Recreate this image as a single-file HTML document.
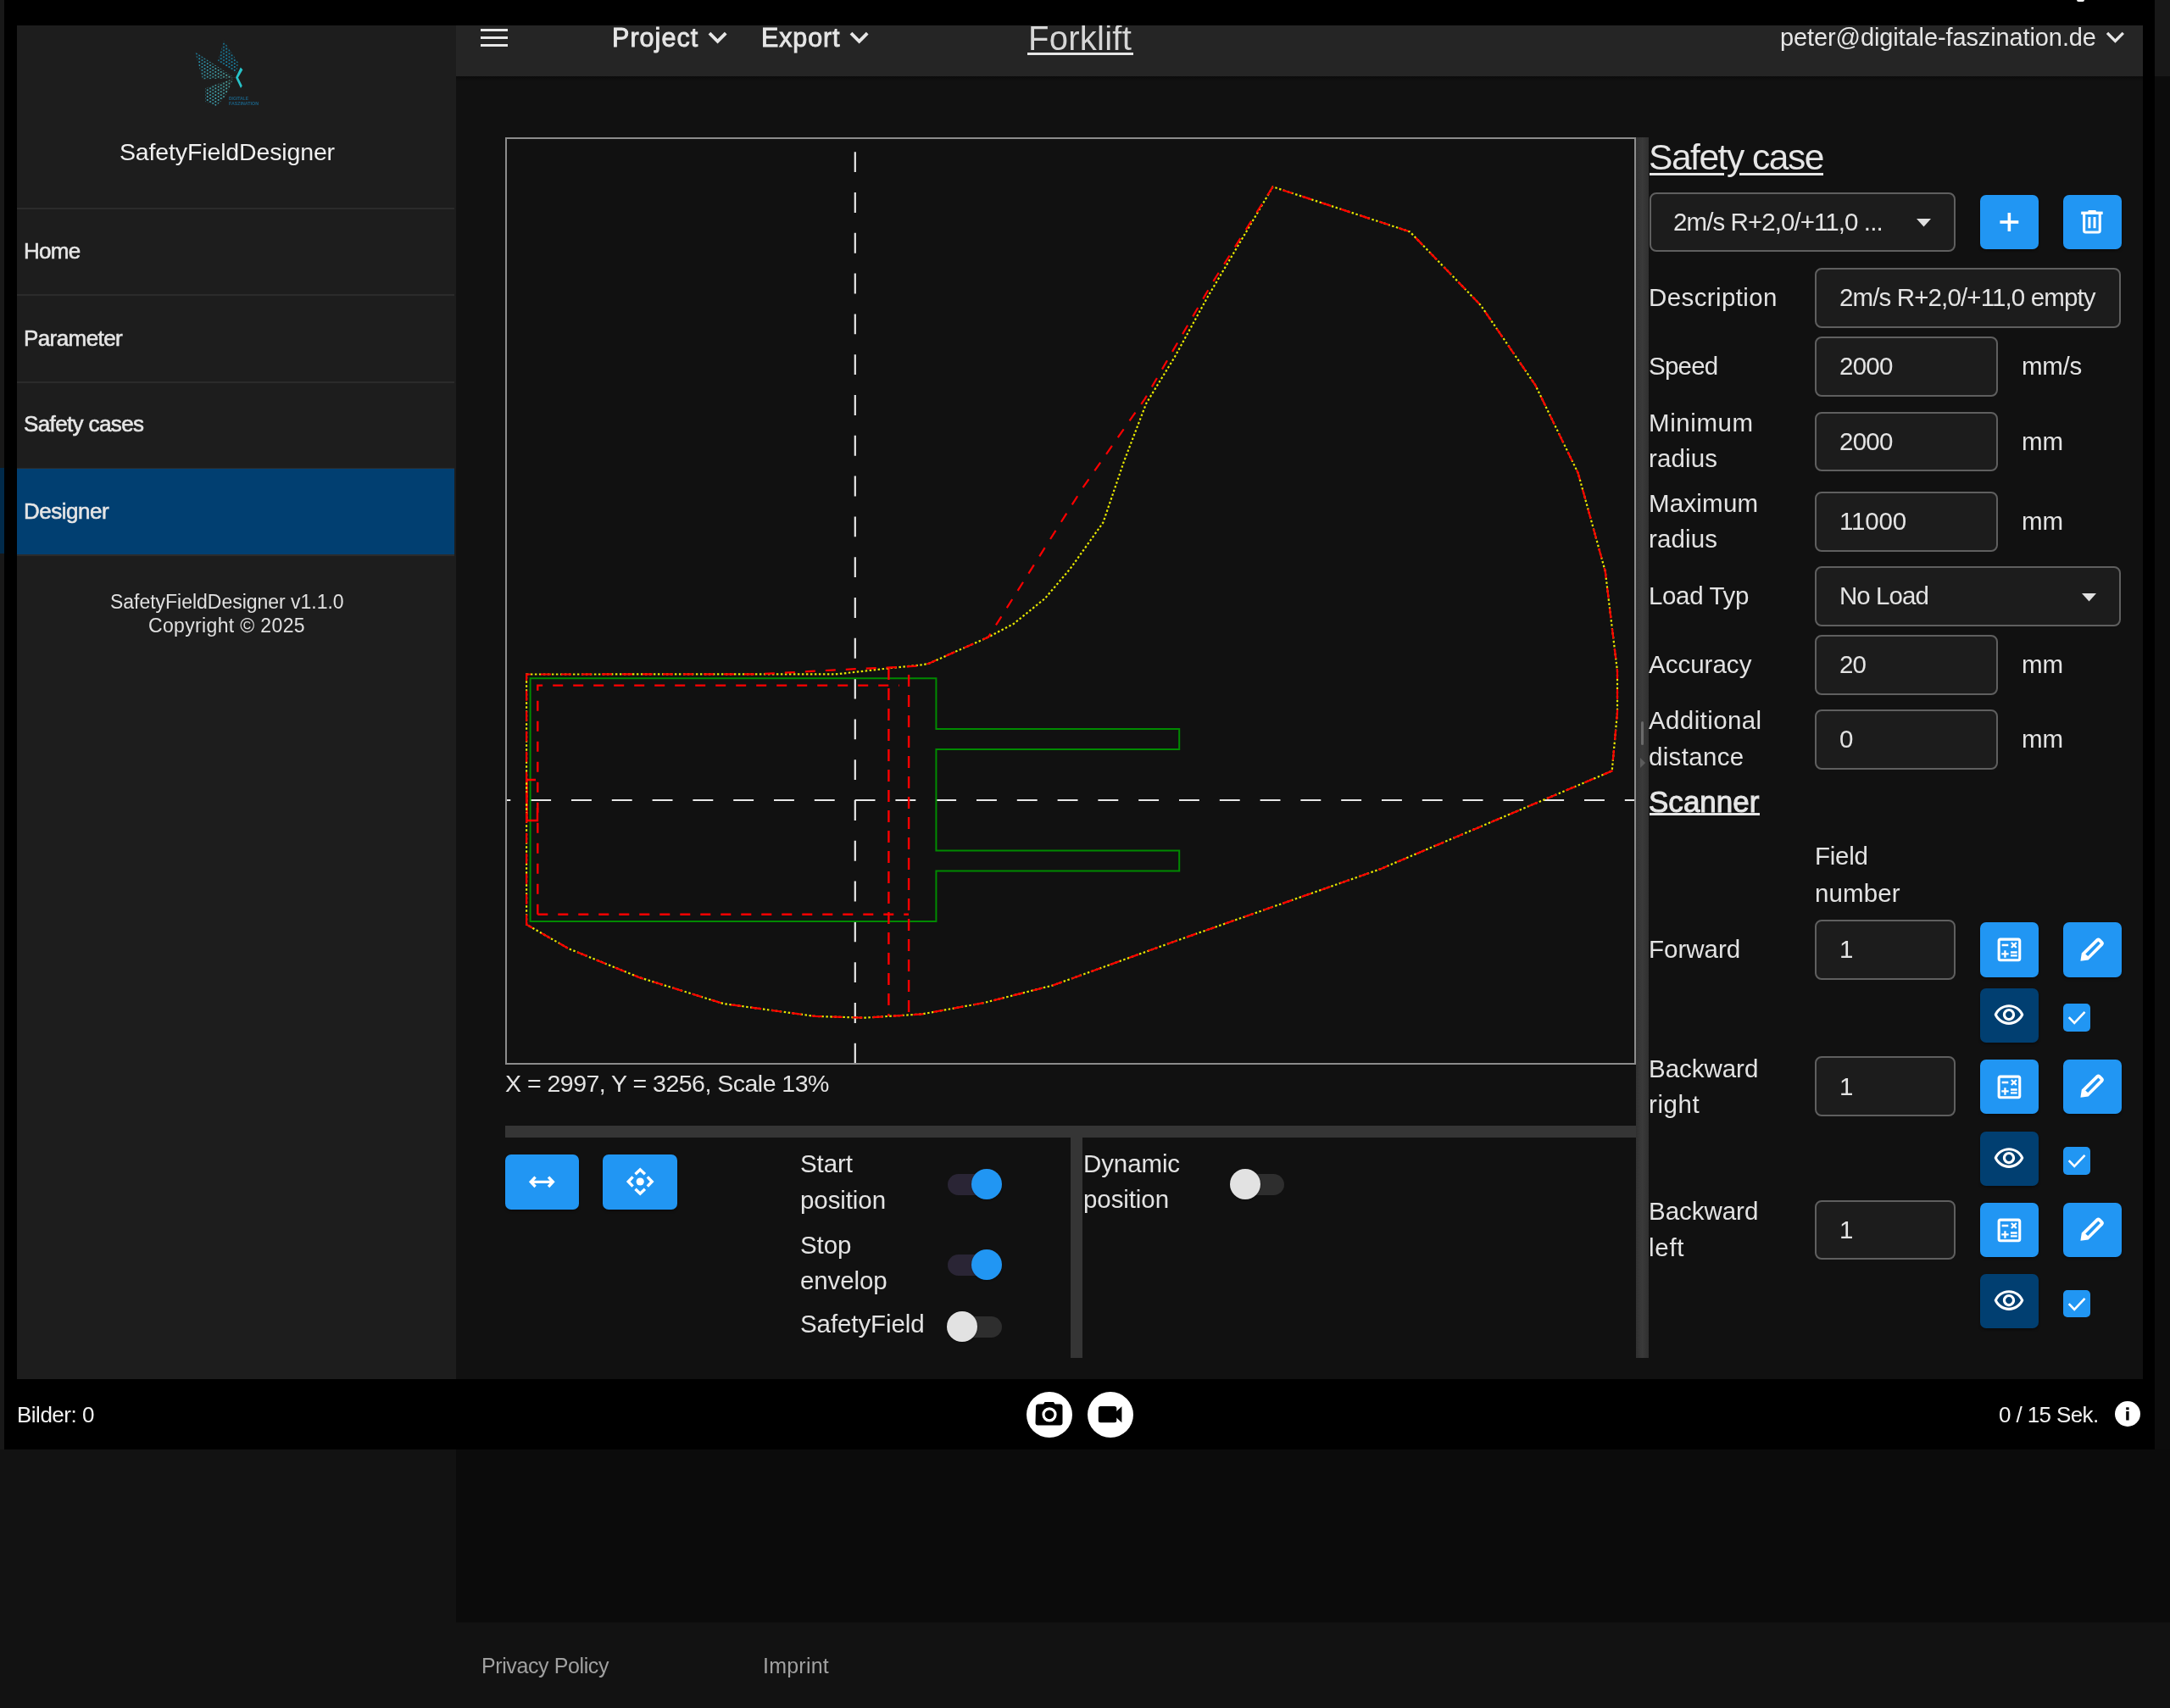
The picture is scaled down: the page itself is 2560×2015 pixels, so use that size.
<!DOCTYPE html>
<html><head><meta charset="utf-8"><title>SafetyFieldDesigner</title>
<style>
html,body{margin:0;padding:0;}
body{width:2560px;height:2015px;background:#121212;overflow:hidden;position:relative;font-family:"Liberation Sans",sans-serif;}
.a{position:absolute;}
.t{white-space:nowrap;will-change:transform;}
svg.a{overflow:visible;}
</style></head><body>
<div class="a" style="left:0px;top:0px;width:5px;height:1710px;background:#181818;"></div>
<div class="a" style="left:0px;top:552px;width:5px;height:101px;background:#012a4a;"></div>
<div class="a" style="left:2542px;top:0px;width:18px;height:90px;background:#181818;"></div>
<div class="a" style="left:2542px;top:90px;width:18px;height:1620px;background:#0c0c0c;"></div>
<div class="a" style="left:538px;top:1710px;width:2022px;height:204px;background:#0b0b0b;"></div>
<div class="a" style="left:5px;top:0px;width:2537px;height:30px;background:#000;z-index:5;"></div>
<div class="a" style="left:5px;top:0px;width:15px;height:1710px;background:#000;z-index:5;"></div>
<div class="a" style="left:2528px;top:0px;width:14px;height:1710px;background:#000;z-index:5;"></div>
<div class="a" style="left:5px;top:1627px;width:2537px;height:83px;background:#000;z-index:5;"></div>
<div class="a" style="left:2450px;top:0px;width:9px;height:2px;background:#f4f4f4;border-radius:0 0 2px 2px;z-index:6;"></div>
<div class="a" style="left:20px;top:30px;width:518px;height:1597px;background:#1d1d1d;"></div>
<div class="a" style="left:538px;top:30px;width:1990px;height:60px;background:#252525;"></div>
<div class="a" style="left:538px;top:90px;width:1990px;height:1537px;background:#111111;"></div>
<div class="a" style="left:538px;top:90px;width:1990px;height:6px;background:linear-gradient(#0b0b0b,#111111);"></div>
<div class="a" style="left:20px;top:245px;width:516px;height:2px;background:#2b2b2b;"></div>
<div class="a" style="left:20px;top:347px;width:516px;height:2px;background:#2b2b2b;"></div>
<div class="a" style="left:20px;top:449.5px;width:516px;height:2px;background:#2b2b2b;"></div>
<div class="a" style="left:20px;top:551.5px;width:516px;height:2px;background:#2b2b2b;"></div>
<div class="a" style="left:20px;top:653.5px;width:516px;height:2px;background:#2b2b2b;"></div>
<div class="a" style="left:20px;top:552.5px;width:516px;height:101px;background:#013f71;"></div>
<div class="a t" style="left:141.0px;top:165.4px;font-size:28.5px;line-height:28.5px;color:#f0f0f0;letter-spacing:-0.14px;">SafetyFieldDesigner</div>
<div class="a t" style="left:27.8px;top:282.6px;font-size:26px;line-height:26px;color:#e6e6e6;letter-spacing:-0.69px;-webkit-text-stroke:0.55px #e6e6e6;">Home</div>
<div class="a t" style="left:27.8px;top:385.6px;font-size:26px;line-height:26px;color:#e6e6e6;letter-spacing:-0.59px;-webkit-text-stroke:0.55px #e6e6e6;">Parameter</div>
<div class="a t" style="left:27.8px;top:487.0px;font-size:26px;line-height:26px;color:#e6e6e6;letter-spacing:-0.62px;-webkit-text-stroke:0.55px #e6e6e6;">Safety cases</div>
<div class="a t" style="left:27.8px;top:589.5px;font-size:26px;line-height:26px;color:#e6e6e6;letter-spacing:-0.49px;-webkit-text-stroke:0.55px #e6e6e6;">Designer</div>
<div class="a t" style="left:130.0px;top:698.5px;font-size:23px;line-height:23px;color:#e0e0e0;letter-spacing:-0.02px;">SafetyFieldDesigner v1.1.0</div>
<div class="a t" style="left:175.0px;top:727.0px;font-size:23px;line-height:23px;color:#e0e0e0;letter-spacing:0.35px;">Copyright © 2025</div>
<div class="a" style="left:567px;top:34px;width:32px;height:3.2px;background:#e8e8e8;"></div>
<div class="a" style="left:567px;top:43px;width:32px;height:3.2px;background:#e8e8e8;"></div>
<div class="a" style="left:567px;top:52px;width:32px;height:3.2px;background:#e8e8e8;"></div>
<div class="a t" style="left:721.7px;top:29.2px;font-size:30.5px;line-height:30.5px;color:#e6e6e6;letter-spacing:1.05px;-webkit-text-stroke:0.9px #e6e6e6;">Project</div>
<div class="a t" style="left:897.7px;top:29.2px;font-size:30.5px;line-height:30.5px;color:#e6e6e6;letter-spacing:0.86px;-webkit-text-stroke:0.9px #e6e6e6;">Export</div>
<div class="a t" style="left:1212.8px;top:25.3px;font-size:40px;line-height:40px;color:#d6d6d6;letter-spacing:0.25px;">Forklift</div>
<div class="a" style="left:1212px;top:62.2px;width:124.5px;height:3px;background:#e6e6e6;"></div>
<div class="a t" style="left:2100.0px;top:29.5px;font-size:29px;line-height:29px;color:#e6e6e6;letter-spacing:-0.11px;">peter@digitale-faszination.de</div>
<svg class="a" style="left:0;top:0" width="1" height="1"><path d="M837,39.2 L846.6,48.8 L856.2,39.2" fill="none" stroke="#e6e6e6" stroke-width="3.9" stroke-linejoin="miter"/></svg>
<svg class="a" style="left:0;top:0" width="1" height="1"><path d="M1004,39.2 L1013.6,48.8 L1023.2,39.2" fill="none" stroke="#e6e6e6" stroke-width="3.9" stroke-linejoin="miter"/></svg>
<svg class="a" style="left:0;top:0" width="1" height="1"><path d="M2486,38.9 L2495.4,48.4 L2504.8,38.9" fill="none" stroke="#e6e6e6" stroke-width="3.4" stroke-linejoin="miter"/></svg>
<div class="a" style="left:596px;top:162px;width:1334px;height:1094px;background:#111111;box-sizing:border-box;border:2px solid #8c8c8c;"></div>
<svg class="a" style="left:0;top:0" width="2560" height="2015" viewBox="0 0 2560 2015"><defs><clipPath id="cv"><rect x="598" y="164" width="1330" height="1090"/></clipPath></defs><g clip-path="url(#cv)"><line x1="578.4" y1="944" x2="1930" y2="944" stroke="#e8e8e8" stroke-width="2.2" stroke-dasharray="23.9 23.9"/><line x1="1008.8" y1="131.4" x2="1008.8" y2="1260" stroke="#e8e8e8" stroke-width="2.2" stroke-dasharray="23.9 23.9"/><polygon points="625.6,800.3 1104.4,800.3 1104.4,859.9 1391.2,859.9 1391.2,884 1104.4,884 1104.4,1003.4 1391.2,1003.4 1391.2,1027.6 1104.4,1027.6 1104.4,1087.1 625.6,1087.1" fill="none" stroke="#008a00" stroke-width="2"/><path d="M634.3,1078.7 V808.6 H1061 M634.3,1078.7 H1072" fill="none" stroke="#f00" stroke-width="2.4" stroke-dasharray="12 12"/><path d="M1048.4,788 V1199 M1072.1,796 V1199" fill="none" stroke="#f00" stroke-width="2.4" stroke-dasharray="14 10"/><path d="M632,920 H621.5 V968 H634 V953" fill="none" stroke="#f00" stroke-width="2.4"/><polygon points="621.1,1090.7 621.1,795.5 985.8,795.4 1009.8,792.8 1051.7,788 1085.3,784.7 1095.4,782.9 1166,751.6 1196,735.8 1232.8,706 1262.7,670.8 1301.4,616.4 1326,544.3 1352.3,475.8 1385.7,421.4 1424.3,351 1501.6,220.4 1663.3,273.4 1746.9,360.2 1811.4,454.5 1861.7,558.1 1893.7,673.8 1908,791.7 1908,840.6 1901.7,909.5 1628.1,1025.4 1387.3,1110 1242.2,1162.4 1161.9,1182.8 1087.8,1196.4 1019.9,1200.7 961.2,1198.9 853.2,1184 754.4,1153.2 671,1119.2" fill="none" stroke="#e8e800" stroke-width="2.2" stroke-dasharray="2.5 2.5"/><polygon points="621.1,1090.7 621.1,795.5 890,795.4 919.9,794 967.8,791.3 1015.8,788.9 1063.7,786.8 1081.7,785.6 1095.4,782.9 1166,751.6 1277,576 1350.6,470.6 1431.4,331.8 1501.6,220.4 1663.3,273.4 1746.9,360.2 1811.4,454.5 1861.7,558.1 1893.7,673.8 1908,791.7 1908,840.6 1901.7,909.5 1628.1,1025.4 1387.3,1110 1242.2,1162.4 1161.9,1182.8 1087.8,1196.4 1019.9,1200.7 961.2,1198.9 853.2,1184 754.4,1153.2 671,1119.2" fill="none" stroke="#f00" stroke-width="2.2" stroke-dasharray="12 12"/></g></svg>
<div class="a t" style="left:595.5px;top:1264.3px;font-size:28.5px;line-height:28.5px;color:#e3e3e3;letter-spacing:-0.51px;">X = 2997, Y = 3256, Scale 13%</div>
<div class="a" style="left:596px;top:1328px;width:1334px;height:14px;background:#353535;"></div>
<div class="a" style="left:1263px;top:1342px;width:14px;height:260px;background:#353535;"></div>
<div class="a" style="left:1930px;top:162px;width:15px;height:1440px;background:linear-gradient(90deg,#303030,#3a3a3a 50%,#303030);"></div>
<div class="a" style="left:1936px;top:850.5px;width:3px;height:28.5px;background:#6a6a6a;border-radius:2px;"></div>
<svg class="a" style="left:1934px;top:894px" width="8" height="12"><polygon points="1,0 7,6 1,12" fill="#5c5c5c"/></svg>
<div class="a" style="left:595.5px;top:1362px;width:87px;height:64.5px;background:#2196f3;border-radius:7px;box-shadow:0 2px 3px rgba(0,0,0,.35);"></div>
<svg class="a" style="left:0;top:0" width="1" height="1"><path d="M631.6,1388.6 L626.2,1394.3 L631.6,1400 M647,1388.6 L652.4,1394.3 L647,1400 M627,1394.3 H651.5" fill="none" stroke="#fff" stroke-width="3.3"/></svg>
<div class="a" style="left:711px;top:1362px;width:88px;height:64.5px;background:#2196f3;border-radius:7px;box-shadow:0 2px 3px rgba(0,0,0,.35);"></div>
<svg class="a" style="left:0;top:0" width="1" height="1"><path d="M749.5,1385.2 L755.2,1379.8 L760.9,1385.2 M749.5,1402.8 L755.2,1408.2 L760.9,1402.8 M746.6,1388.3 L741.2,1394 L746.6,1399.7 M763.8,1388.3 L769.2,1394 L763.8,1399.7" fill="none" stroke="#fff" stroke-width="3.4"/><circle cx="755.2" cy="1394" r="4.6" fill="#fff"/></svg>
<div class="a t" style="left:944.0px;top:1357.6px;font-size:29.5px;line-height:29.5px;color:#e3e3e3;letter-spacing:-0.08px;">Start</div>
<div class="a t" style="left:944.0px;top:1401.1px;font-size:29.5px;line-height:29.5px;color:#e3e3e3;letter-spacing:-0.09px;">position</div>
<div class="a" style="left:1117.5px;top:1384.5px;width:64px;height:25px;border-radius:12.5px;background:#2a2535;"></div>
<div class="a" style="left:1146.0px;top:1379px;width:36px;height:36px;border-radius:18px;background:#2196f3;box-shadow:0 1px 2px rgba(0,0,0,.3);"></div>
<div class="a t" style="left:944.0px;top:1453.7px;font-size:29.5px;line-height:29.5px;color:#e3e3e3;letter-spacing:-0.10px;">Stop</div>
<div class="a t" style="left:944.0px;top:1495.6px;font-size:29.5px;line-height:29.5px;color:#e3e3e3;letter-spacing:-0.10px;">envelop</div>
<div class="a" style="left:1117.5px;top:1479.5px;width:64px;height:25px;border-radius:12.5px;background:#2a2535;"></div>
<div class="a" style="left:1146.0px;top:1474px;width:36px;height:36px;border-radius:18px;background:#2196f3;box-shadow:0 1px 2px rgba(0,0,0,.3);"></div>
<div class="a t" style="left:944.0px;top:1547.3px;font-size:29.5px;line-height:29.5px;color:#e3e3e3;letter-spacing:-0.09px;">SafetyField</div>
<div class="a" style="left:1117.5px;top:1552.8px;width:64px;height:25px;border-radius:12.5px;background:#2e2e2e;"></div>
<div class="a" style="left:1117.0px;top:1547.3px;width:36px;height:36px;border-radius:18px;background:#e2e2e2;box-shadow:0 1px 2px rgba(0,0,0,.3);"></div>
<div class="a t" style="left:1278.0px;top:1357.6px;font-size:29.5px;line-height:29.5px;color:#e3e3e3;letter-spacing:-0.11px;">Dynamic</div>
<div class="a t" style="left:1278.0px;top:1400.4px;font-size:29.5px;line-height:29.5px;color:#e3e3e3;letter-spacing:-0.09px;">position</div>
<div class="a" style="left:1451px;top:1384.5px;width:64px;height:25px;border-radius:12.5px;background:#2e2e2e;"></div>
<div class="a" style="left:1450.5px;top:1379px;width:36px;height:36px;border-radius:18px;background:#e2e2e2;box-shadow:0 1px 2px rgba(0,0,0,.3);"></div>
<div class="a t" style="left:1944.5px;top:165.4px;font-size:42.5px;line-height:42.5px;color:#e6e6e6;letter-spacing:-1.46px;">Safety case</div>
<div class="a" style="left:1945.5px;top:204px;width:88.5px;height:3.4px;background:#e6e6e6;"></div>
<div class="a" style="left:2051.5px;top:204px;width:99.5px;height:3.4px;background:#e6e6e6;"></div>
<div class="a" style="left:1945.5px;top:226.5px;width:361.5px;height:70.5px;box-sizing:border-box;border:2px solid #5f5f5f;border-radius:8px;background:#1c1c1c;"></div>
<div class="a t" style="left:1974.4px;top:247.3px;font-size:29.5px;line-height:29.5px;color:#e3e3e3;letter-spacing:-0.92px;">2m/s R+2,0/+11,0 ...</div>
<svg class="a" style="left:2261px;top:258px" width="17" height="9.5"><polygon points="0,0 17,0 8.5,9.5" fill="#e0e0e0"/></svg>
<div class="a" style="left:2336px;top:229.7px;width:69px;height:64.5px;background:#2196f3;border-radius:7px;box-shadow:0 2px 3px rgba(0,0,0,.35);"></div>
<svg class="a" style="left:0;top:0" width="1" height="1"><rect x="2359.4" y="260.2" width="21.9" height="3.6" fill="#fff"/><rect x="2368.55" y="251" width="3.6" height="21.9" fill="#fff"/></svg>
<div class="a" style="left:2433.5px;top:229.7px;width:69px;height:64.5px;background:#2196f3;border-radius:7px;box-shadow:0 2px 3px rgba(0,0,0,.35);"></div>
<svg class="a" style="left:0;top:0" width="1" height="1"><rect x="2455.2" y="249.6" width="25.5" height="3.4" fill="#fff"/><rect x="2463.4" y="247.9" width="9.4" height="3" rx="1" fill="#fff"/><path d="M2457.1,252.8 H2478.8 V272 A3.5,3.5 0 0 1 2475.3,275.5 H2460.6 A3.5,3.5 0 0 1 2457.1,272 Z M2460.2,252.8 V272.4 H2475.7 V252.8 Z" fill="#fff" fill-rule="evenodd"/><rect x="2463.4" y="256" width="3" height="13.2" fill="#fff"/><rect x="2469.5" y="256" width="3" height="13.2" fill="#fff"/></svg>
<div class="a t" style="left:1944.8px;top:336.4px;font-size:29.5px;line-height:29.5px;color:#e3e3e3;letter-spacing:0.39px;">Description</div>
<div class="a" style="left:2140.5px;top:316px;width:361.5px;height:70.5px;box-sizing:border-box;border:2px solid #5f5f5f;border-radius:8px;background:#1c1c1c;"></div>
<div class="a t" style="left:2170.4px;top:336.4px;font-size:29.5px;line-height:29.5px;color:#e3e3e3;letter-spacing:-0.87px;">2m/s R+2,0/+11,0 empty</div>
<div class="a t" style="left:1944.8px;top:417.4px;font-size:29.5px;line-height:29.5px;color:#e3e3e3;letter-spacing:-0.76px;">Speed</div>
<div class="a" style="left:2140.5px;top:397px;width:216px;height:70.5px;box-sizing:border-box;border:2px solid #5f5f5f;border-radius:8px;background:#1c1c1c;"></div>
<div class="a t" style="left:2170.4px;top:417.3px;font-size:29.5px;line-height:29.5px;color:#e3e3e3;letter-spacing:-0.73px;">2000</div>
<div class="a t" style="left:2385.4px;top:417.3px;font-size:29.5px;line-height:29.5px;color:#e3e3e3;letter-spacing:-0.32px;">mm/s</div>
<div class="a t" style="left:1944.8px;top:484.3px;font-size:29.5px;line-height:29.5px;color:#e3e3e3;letter-spacing:0.58px;">Minimum</div>
<div class="a t" style="left:1944.8px;top:526.0px;font-size:29.5px;line-height:29.5px;color:#e3e3e3;letter-spacing:0.11px;">radius</div>
<div class="a" style="left:2140.5px;top:485.5px;width:216px;height:70.5px;box-sizing:border-box;border:2px solid #5f5f5f;border-radius:8px;background:#1c1c1c;"></div>
<div class="a t" style="left:2170.4px;top:505.8px;font-size:29.5px;line-height:29.5px;color:#e3e3e3;letter-spacing:-0.73px;">2000</div>
<div class="a t" style="left:2385.4px;top:505.8px;font-size:29.5px;line-height:29.5px;color:#e3e3e3;letter-spacing:-0.17px;">mm</div>
<div class="a t" style="left:1944.8px;top:579.0px;font-size:29.5px;line-height:29.5px;color:#e3e3e3;letter-spacing:0.21px;">Maximum</div>
<div class="a t" style="left:1944.8px;top:621.2px;font-size:29.5px;line-height:29.5px;color:#e3e3e3;letter-spacing:0.11px;">radius</div>
<div class="a" style="left:2140.5px;top:580px;width:216px;height:70.5px;box-sizing:border-box;border:2px solid #5f5f5f;border-radius:8px;background:#1c1c1c;"></div>
<div class="a t" style="left:2170.4px;top:600.3px;font-size:29.5px;line-height:29.5px;color:#e3e3e3;letter-spacing:-0.17px;">11000</div>
<div class="a t" style="left:2385.4px;top:600.3px;font-size:29.5px;line-height:29.5px;color:#e3e3e3;letter-spacing:-0.17px;">mm</div>
<div class="a t" style="left:1944.8px;top:769.0px;font-size:29.5px;line-height:29.5px;color:#e3e3e3;letter-spacing:0.01px;">Accuracy</div>
<div class="a" style="left:2140.5px;top:749px;width:216px;height:70.5px;box-sizing:border-box;border:2px solid #5f5f5f;border-radius:8px;background:#1c1c1c;"></div>
<div class="a t" style="left:2170.4px;top:769.3px;font-size:29.5px;line-height:29.5px;color:#e3e3e3;letter-spacing:-0.96px;">20</div>
<div class="a t" style="left:2385.4px;top:769.3px;font-size:29.5px;line-height:29.5px;color:#e3e3e3;letter-spacing:-0.17px;">mm</div>
<div class="a t" style="left:1944.8px;top:835.3px;font-size:29.5px;line-height:29.5px;color:#e3e3e3;letter-spacing:0.39px;">Additional</div>
<div class="a t" style="left:1944.8px;top:878.0px;font-size:29.5px;line-height:29.5px;color:#e3e3e3;letter-spacing:0.33px;">distance</div>
<div class="a" style="left:2140.5px;top:837px;width:216px;height:70.5px;box-sizing:border-box;border:2px solid #5f5f5f;border-radius:8px;background:#1c1c1c;"></div>
<div class="a t" style="left:2170.4px;top:857.3px;font-size:29.5px;line-height:29.5px;color:#e3e3e3;letter-spacing:-1.51px;">0</div>
<div class="a t" style="left:2385.4px;top:857.3px;font-size:29.5px;line-height:29.5px;color:#e3e3e3;letter-spacing:-0.17px;">mm</div>
<div class="a t" style="left:1944.8px;top:688.3px;font-size:29.5px;line-height:29.5px;color:#e3e3e3;letter-spacing:-0.35px;">Load Typ</div>
<div class="a" style="left:2140.5px;top:668.3px;width:361.5px;height:70.5px;box-sizing:border-box;border:2px solid #5f5f5f;border-radius:8px;background:#1c1c1c;"></div>
<div class="a t" style="left:2170.4px;top:688.3px;font-size:29.5px;line-height:29.5px;color:#e3e3e3;letter-spacing:-0.95px;">No Load</div>
<svg class="a" style="left:2456px;top:700px" width="17" height="9.5"><polygon points="0,0 17,0 8.5,9.5" fill="#e0e0e0"/></svg>
<div class="a t" style="left:1944.8px;top:927.7px;font-size:35px;line-height:35px;color:#e6e6e6;letter-spacing:0.02px;-webkit-text-stroke:1px #e6e6e6;">Scanner</div>
<div class="a" style="left:1945.5px;top:959px;width:130.5px;height:3.2px;background:#e6e6e6;"></div>
<div class="a t" style="left:2141.4px;top:995.4px;font-size:29.5px;line-height:29.5px;color:#e3e3e3;letter-spacing:-0.25px;">Field</div>
<div class="a t" style="left:2141.4px;top:1039.0px;font-size:29.5px;line-height:29.5px;color:#e3e3e3;letter-spacing:0.10px;">number</div>
<div class="a t" style="left:1944.8px;top:1105.0px;font-size:29.5px;line-height:29.5px;color:#e3e3e3;">Forward</div>
<div class="a" style="left:2140.5px;top:1085px;width:166.5px;height:70.5px;box-sizing:border-box;border:2px solid #5f5f5f;border-radius:8px;background:#1c1c1c;"></div>
<div class="a t" style="left:2170.4px;top:1105.3px;font-size:29.5px;line-height:29.5px;color:#e3e3e3;letter-spacing:-0.11px;">1</div>
<div class="a" style="left:2336px;top:1088.2px;width:69px;height:64.5px;background:#2196f3;border-radius:7px;box-shadow:0 2px 3px rgba(0,0,0,.35);"></div>
<svg class="a" style="left:2351.7px;top:1102.2px" width="36.9" height="36.9" viewBox="0 0 24 24"><path d="M19 3H5c-1.1 0-2 .9-2 2v14c0 1.1.9 2 2 2h14c1.1 0 2-.9 2-2V5c0-1.1-.9-2-2-2zm0 16H5V5h14v14zM6.25 7.72h5v1.5h-5zM13 15.75h5v1.5h-5zm0-2.5h5v1.5h-5zM8 18h1.5v-2h2v-1.5h-2v-2H8v2H6v1.5h2zm6.09-7.05l1.41-1.41 1.41 1.41 1.06-1.06-1.41-1.420 1.41-1.41L16.91 6 15.5 7.41 14.09 6l-1.06 1.06 1.41 1.41-1.41 1.42z" fill="#fff" /></svg>
<div class="a" style="left:2433.5px;top:1088.2px;width:69px;height:64.5px;background:#2196f3;border-radius:7px;box-shadow:0 2px 3px rgba(0,0,0,.35);"></div>
<svg class="a" style="left:0;top:-0.09999999999990905px" width="1" height="1"><path d="M2454.4,1133.8 L2455.8,1124.6 L2473,1107.6 Q2475.4,1105.3 2477.8,1107.6 L2480.8,1110.6 Q2483.1,1113 2480.8,1115.4 L2463.6,1132.6 Z M2460.2,1125.5 L2475.4,1110.5 L2477.9,1113.1 L2463.2,1128.1 Z" fill="#fff" fill-rule="evenodd"/></svg>
<div class="a" style="left:2336px;top:1165.5px;width:69px;height:64px;background:#013f71;border-radius:7px;box-shadow:0 2px 3px rgba(0,0,0,.35);"></div>
<svg class="a" style="left:2350.5px;top:1177.5px" width="38" height="38" viewBox="0 0 24 24"><path d="M12 6.5c3.79 0 7.17 2.13 8.82 5.5-1.65 3.37-5.02 5.5-8.82 5.5S4.83 15.37 3.18 12C4.83 8.63 8.21 6.5 12 6.5m0-2C7 4.5 2.73 7.61 1 12c1.73 4.39 6 7.5 11 7.5s9.27-3.11 11-7.5c-1.73-4.39-6-7.5-11-7.5zm0 5c1.38 0 2.5 1.12 2.5 2.5s-1.12 2.5-2.5 2.5-2.5-1.12-2.5-2.5 1.12-2.5 2.5-2.5m0-2c-2.48 0-4.5 2.02-4.5 4.5s2.02 4.5 4.5 4.5 4.5-2.02 4.5-4.5-2.02-4.5-4.5-4.5z" fill="#fff" /></svg>
<div class="a" style="left:2433.5px;top:1184.0px;width:32.5px;height:32.5px;border-radius:5px;background:#2196f3;"></div>
<svg class="a" style="left:2433.5px;top:1184.0px" width="33" height="33"><polyline points="6.7,16.1 13.2,22.9 25.5,9.8" fill="none" stroke="#fff" stroke-width="2.6"/></svg>
<div class="a t" style="left:1944.8px;top:1245.8px;font-size:29.5px;line-height:29.5px;color:#e3e3e3;letter-spacing:-0.03px;">Backward</div>
<div class="a t" style="left:1944.8px;top:1288.0px;font-size:29.5px;line-height:29.5px;color:#e3e3e3;letter-spacing:0.60px;">right</div>
<div class="a" style="left:2140.5px;top:1246.3px;width:166.5px;height:70.5px;box-sizing:border-box;border:2px solid #5f5f5f;border-radius:8px;background:#1c1c1c;"></div>
<div class="a t" style="left:2170.4px;top:1266.6px;font-size:29.5px;line-height:29.5px;color:#e3e3e3;letter-spacing:-0.11px;">1</div>
<div class="a" style="left:2336px;top:1249.5px;width:69px;height:64.5px;background:#2196f3;border-radius:7px;box-shadow:0 2px 3px rgba(0,0,0,.35);"></div>
<svg class="a" style="left:2351.7px;top:1263.5px" width="36.9" height="36.9" viewBox="0 0 24 24"><path d="M19 3H5c-1.1 0-2 .9-2 2v14c0 1.1.9 2 2 2h14c1.1 0 2-.9 2-2V5c0-1.1-.9-2-2-2zm0 16H5V5h14v14zM6.25 7.72h5v1.5h-5zM13 15.75h5v1.5h-5zm0-2.5h5v1.5h-5zM8 18h1.5v-2h2v-1.5h-2v-2H8v2H6v1.5h2zm6.09-7.05l1.41-1.41 1.41 1.41 1.06-1.06-1.41-1.420 1.41-1.41L16.91 6 15.5 7.41 14.09 6l-1.06 1.06 1.41 1.41-1.41 1.42z" fill="#fff" /></svg>
<div class="a" style="left:2433.5px;top:1249.5px;width:69px;height:64.5px;background:#2196f3;border-radius:7px;box-shadow:0 2px 3px rgba(0,0,0,.35);"></div>
<svg class="a" style="left:0;top:161.20000000000005px" width="1" height="1"><path d="M2454.4,1133.8 L2455.8,1124.6 L2473,1107.6 Q2475.4,1105.3 2477.8,1107.6 L2480.8,1110.6 Q2483.1,1113 2480.8,1115.4 L2463.6,1132.6 Z M2460.2,1125.5 L2475.4,1110.5 L2477.9,1113.1 L2463.2,1128.1 Z" fill="#fff" fill-rule="evenodd"/></svg>
<div class="a" style="left:2336px;top:1334.6px;width:69px;height:64px;background:#013f71;border-radius:7px;box-shadow:0 2px 3px rgba(0,0,0,.35);"></div>
<svg class="a" style="left:2350.5px;top:1346.6px" width="38" height="38" viewBox="0 0 24 24"><path d="M12 6.5c3.79 0 7.17 2.13 8.82 5.5-1.65 3.37-5.02 5.5-8.82 5.5S4.83 15.37 3.18 12C4.83 8.63 8.21 6.5 12 6.5m0-2C7 4.5 2.73 7.61 1 12c1.73 4.39 6 7.5 11 7.5s9.27-3.11 11-7.5c-1.73-4.39-6-7.5-11-7.5zm0 5c1.38 0 2.5 1.12 2.5 2.5s-1.12 2.5-2.5 2.5-2.5-1.12-2.5-2.5 1.12-2.5 2.5-2.5m0-2c-2.48 0-4.5 2.02-4.5 4.5s2.02 4.5 4.5 4.5 4.5-2.02 4.5-4.5-2.02-4.5-4.5-4.5z" fill="#fff" /></svg>
<div class="a" style="left:2433.5px;top:1353.1px;width:32.5px;height:32.5px;border-radius:5px;background:#2196f3;"></div>
<svg class="a" style="left:2433.5px;top:1353.1px" width="33" height="33"><polyline points="6.7,16.1 13.2,22.9 25.5,9.8" fill="none" stroke="#fff" stroke-width="2.6"/></svg>
<div class="a t" style="left:1944.8px;top:1414.4px;font-size:29.5px;line-height:29.5px;color:#e3e3e3;letter-spacing:-0.03px;">Backward</div>
<div class="a t" style="left:1944.8px;top:1456.6px;font-size:29.5px;line-height:29.5px;color:#e3e3e3;letter-spacing:0.71px;">left</div>
<div class="a" style="left:2140.5px;top:1415.5px;width:166.5px;height:70.5px;box-sizing:border-box;border:2px solid #5f5f5f;border-radius:8px;background:#1c1c1c;"></div>
<div class="a t" style="left:2170.4px;top:1435.8px;font-size:29.5px;line-height:29.5px;color:#e3e3e3;letter-spacing:-0.11px;">1</div>
<div class="a" style="left:2336px;top:1418.7px;width:69px;height:64.5px;background:#2196f3;border-radius:7px;box-shadow:0 2px 3px rgba(0,0,0,.35);"></div>
<svg class="a" style="left:2351.7px;top:1432.7px" width="36.9" height="36.9" viewBox="0 0 24 24"><path d="M19 3H5c-1.1 0-2 .9-2 2v14c0 1.1.9 2 2 2h14c1.1 0 2-.9 2-2V5c0-1.1-.9-2-2-2zm0 16H5V5h14v14zM6.25 7.72h5v1.5h-5zM13 15.75h5v1.5h-5zm0-2.5h5v1.5h-5zM8 18h1.5v-2h2v-1.5h-2v-2H8v2H6v1.5h2zm6.09-7.05l1.41-1.41 1.41 1.41 1.06-1.06-1.41-1.420 1.41-1.41L16.91 6 15.5 7.41 14.09 6l-1.06 1.06 1.41 1.41-1.41 1.42z" fill="#fff" /></svg>
<div class="a" style="left:2433.5px;top:1418.7px;width:69px;height:64.5px;background:#2196f3;border-radius:7px;box-shadow:0 2px 3px rgba(0,0,0,.35);"></div>
<svg class="a" style="left:0;top:330.4000000000001px" width="1" height="1"><path d="M2454.4,1133.8 L2455.8,1124.6 L2473,1107.6 Q2475.4,1105.3 2477.8,1107.6 L2480.8,1110.6 Q2483.1,1113 2480.8,1115.4 L2463.6,1132.6 Z M2460.2,1125.5 L2475.4,1110.5 L2477.9,1113.1 L2463.2,1128.1 Z" fill="#fff" fill-rule="evenodd"/></svg>
<div class="a" style="left:2336px;top:1503.3px;width:69px;height:64px;background:#013f71;border-radius:7px;box-shadow:0 2px 3px rgba(0,0,0,.35);"></div>
<svg class="a" style="left:2350.5px;top:1515.3px" width="38" height="38" viewBox="0 0 24 24"><path d="M12 6.5c3.79 0 7.17 2.13 8.82 5.5-1.65 3.37-5.02 5.5-8.82 5.5S4.83 15.37 3.18 12C4.83 8.63 8.21 6.5 12 6.5m0-2C7 4.5 2.73 7.61 1 12c1.73 4.39 6 7.5 11 7.5s9.27-3.11 11-7.5c-1.73-4.39-6-7.5-11-7.5zm0 5c1.38 0 2.5 1.12 2.5 2.5s-1.12 2.5-2.5 2.5-2.5-1.12-2.5-2.5 1.12-2.5 2.5-2.5m0-2c-2.48 0-4.5 2.02-4.5 4.5s2.02 4.5 4.5 4.5 4.5-2.02 4.5-4.5-2.02-4.5-4.5-4.5z" fill="#fff" /></svg>
<div class="a" style="left:2433.5px;top:1521.8px;width:32.5px;height:32.5px;border-radius:5px;background:#2196f3;"></div>
<svg class="a" style="left:2433.5px;top:1521.8px" width="33" height="33"><polyline points="6.7,16.1 13.2,22.9 25.5,9.8" fill="none" stroke="#fff" stroke-width="2.6"/></svg>
<div class="a t" style="left:20.0px;top:1656.0px;font-size:26px;line-height:26px;color:#f2f2f2;letter-spacing:-0.50px;z-index:7;">Bilder: 0</div>
<div class="a t" style="left:2358.0px;top:1656.0px;font-size:26px;line-height:26px;color:#f2f2f2;letter-spacing:-0.62px;z-index:7;">0 / 15 Sek.</div>
<svg class="a" style="left:1211px;top:1642px;z-index:7" width="54" height="54" viewBox="0 0 54 54"><circle cx="27" cy="27" r="27" fill="#fff"/>
<path d="M11,17.5 a3,3 0 0 1 3,-3 h6 l1.5,-2.5 h10.5 l1.5,2.5 h6 a3,3 0 0 1 3,3 v19 a3,3 0 0 1 -3,3 h-26 a3,3 0 0 1 -3,-3z" fill="#000"/>
<circle cx="27" cy="26.8" r="8.6" fill="#fff"/><circle cx="27" cy="26.8" r="5.4" fill="#000"/></svg>
<svg class="a" style="left:1283px;top:1642px;z-index:7" width="54" height="54" viewBox="0 0 54 54"><circle cx="27" cy="27" r="27" fill="#fff"/>
<rect x="12.8" y="17" width="21.5" height="19.3" rx="2.5" fill="#000"/><polygon points="33.5,23.5 40.4,17.2 40.4,36.2 33.5,30" fill="#000"/></svg>
<svg class="a" style="left:2495px;top:1653px;z-index:7" width="30" height="30" viewBox="0 0 30 30"><circle cx="15" cy="15" r="15" fill="#fff"/>
<rect x="13.2" y="7.3" width="3.4" height="3" fill="#000"/><rect x="13.2" y="12" width="3.4" height="10.5" fill="#000"/></svg>
<div class="a t" style="left:567.6px;top:1953.4px;font-size:25px;line-height:25px;color:#a0a0a0;letter-spacing:-0.40px;">Privacy Policy</div>
<div class="a t" style="left:900.0px;top:1953.4px;font-size:25px;line-height:25px;color:#a0a0a0;letter-spacing:0.23px;">Imprint</div>
<svg class="a" style="left:220px;top:40px" width="95" height="95" viewBox="220 40 95 95">
<defs>
<pattern id="dp" x="0" y="0" width="6.4" height="3.9" patternUnits="userSpaceOnUse"><circle cx="1.6" cy="1" r="0.98" fill="#fff"/><circle cx="4.8" cy="2.95" r="0.98" fill="#fff"/></pattern>
<mask id="dm" maskUnits="userSpaceOnUse" x="220" y="40" width="95" height="95"><rect x="220" y="40" width="95" height="95" fill="url(#dp)"/></mask>
<linearGradient id="lg1" gradientUnits="userSpaceOnUse" x1="230" y1="61" x2="277" y2="93"><stop offset="0" stop-color="#1b8cb2"/><stop offset="1" stop-color="#62c2b8"/></linearGradient>
<linearGradient id="lg2" gradientUnits="userSpaceOnUse" x1="275" y1="93" x2="242" y2="124"><stop offset="0" stop-color="#5cc0b5"/><stop offset="1" stop-color="#3aa8c0"/></linearGradient>
</defs>
<g mask="url(#dm)">
<polygon points="230,61 277,92 239,93.5" fill="url(#lg1)"/>
<polygon points="264,48 281,74 279,87 257,72" fill="#1a8db2"/>
<polygon points="242,104 275,93 271,103 265,115 255,125 242,120" fill="url(#lg2)"/>
</g>
<polygon points="283.8,79.6 286.4,82.2 281,91.6 285.8,101.2 284,104 278,91.6" fill="#27c2c8"/>
<text x="270" y="118" font-family="Liberation Sans" font-weight="bold" font-size="6" fill="#1b6184" textLength="23" lengthAdjust="spacingAndGlyphs">DIGITALE</text>
<text x="270" y="124.3" font-family="Liberation Sans" font-weight="bold" font-size="6" fill="#1b6184" textLength="35" lengthAdjust="spacingAndGlyphs">FASZINATION</text>
</svg>
</body></html>
